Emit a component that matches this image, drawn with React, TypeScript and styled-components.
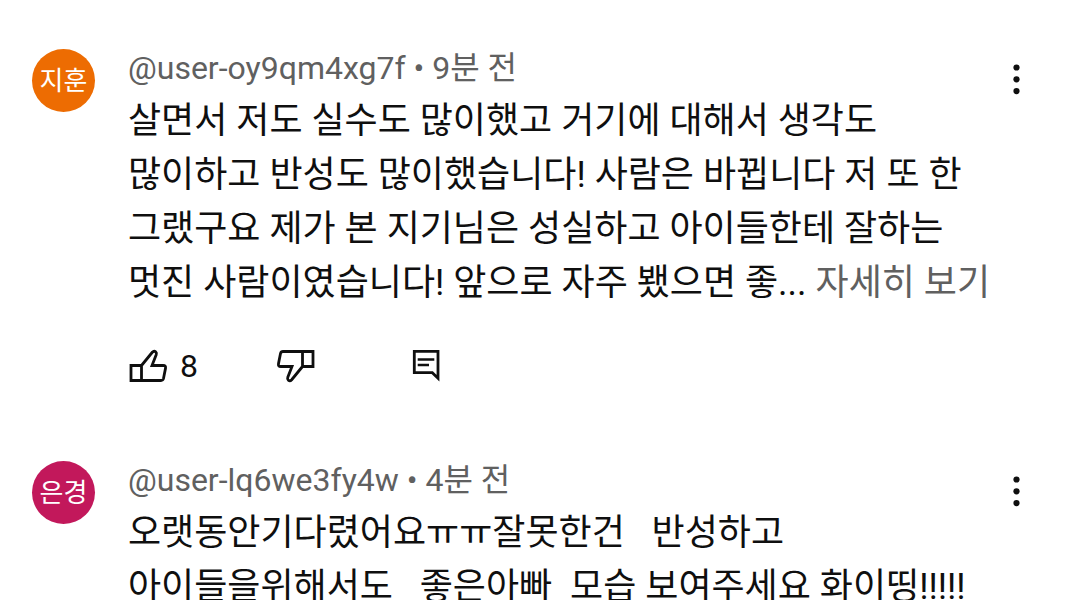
import React from 'react';
import styled, { createGlobalStyle } from 'styled-components';

const Global = createGlobalStyle`
  body { margin: 0; background: #fff; overflow: hidden; font-family: Roboto, "Noto Sans CJK KR", sans-serif; color: #0f0f0f; }
  * { box-sizing: border-box; }
`;
const List = styled.main`
  display: flex; flex-direction: column; gap: 75px; padding: 49px 48px 0 32px; height: 100vh; overflow: hidden;
`;
const Comment = styled.article`
  display: grid; grid-template-columns: 64px minmax(0, 1fr) 32px; column-gap: 32px; flex-shrink: 0;
`;
const Avatar = styled.div<{ $color: string }>`
  width: 63px; height: 63px; border-radius: 50%; background: ${p => p.$color}; color: #fff;
  display: flex; align-items: center; justify-content: center; font-size: 26px; line-height: 32px;
`;
const Meta = styled.header`font-size: 32px; line-height: 38px; color: #606060; white-space: pre;`;
const Handle = styled.a`color: inherit; text-decoration: none;`;
const Body = styled.p`margin: 7px 0 0; font-size: 36px; line-height: 54px;`;
const Line = styled.span`display: block; white-space: pre;`;
const More = styled.button`
  border: 0; padding: 0; background: none; font: inherit; color: #606060; cursor: pointer;
`;
const Actions = styled.div`
  display: grid; grid-template-columns: 148px 136px auto; justify-content: start; margin-top: 36px; height: 40px;
`;
const Action = styled.button`
  display: flex; align-items: center; justify-self: start; gap: 12px; border: 0; padding: 0; background: none;
  color: #0f0f0f; font: inherit; font-size: 32px; line-height: 40px; cursor: pointer;
`;
const Menu = styled.button`
  border: 0; padding: 12px 0 0; height: 48px; width: 32px; background: none; cursor: pointer;
`;
const Icon = styled.svg`display: block; flex-shrink: 0;`;

const Dots = () => (
  <Icon width="32" height="36" viewBox="0 0 32 36" fill="#0f0f0f">
    <circle cx="16.5" cy="6.5" r="3.1" /><circle cx="16.5" cy="18.3" r="3.1" /><circle cx="16.5" cy="30.1" r="3.1" />
  </Icon>
);
const thumb = 'M3 19.5H13.5V34.5H3ZM13.5 19.5L24.3 6.3Q26 4.5 27.7 5.8Q28.9 6.8 28.2 8.8L24 19.5H35.2Q38.1 19.5 37.5 22.4L35.5 32.5Q35 34.5 33 34.5H13.5';
const Like = () => (
  <Icon width="40" height="40" viewBox="0 0 40 40" fill="none" stroke="currentColor" strokeWidth="2.8"><path d={thumb} /></Icon>
);
const Dislike = () => (
  <Icon width="40" height="40" viewBox="0 0 40 40" fill="none" stroke="currentColor" strokeWidth="2.8"><path d={thumb} transform="rotate(180 20 20)" /></Icon>
);
const Reply = () => (
  <Icon width="32" height="40" viewBox="0 0 32 40" fill="none" stroke="currentColor" strokeWidth="2.8">
    <path d="M2.3 5.3H26V32.2L20.3 26.7H2.3Z" /><path d="M5.7 13.4H22.3M5.7 19H17" strokeWidth="2.5" />
  </Icon>
);

type Props = {
  initials: string; color: string; user: string; time: string; lines: string[]; truncated?: boolean; likes?: number;
};
const CommentItem = ({ initials, color, user, time, lines, truncated, likes }: Props) => (
  <Comment>
    <Avatar $color={color}>{initials}</Avatar>
    <div>
      <Meta><Handle href="#">{user}</Handle> • {time}</Meta>
      <Body>
        {lines.map((line, i) => (
          <Line key={line}>
            {line}
            {truncated && i === lines.length - 1 && <> <More>자세히 보기</More></>}
          </Line>
        ))}
      </Body>
      {likes !== undefined && (
        <Actions>
          <Action aria-label="좋아요"><Like />{likes}</Action>
          <Action aria-label="싫어요"><Dislike /></Action>
          <Action aria-label="답글"><Reply /></Action>
        </Actions>
      )}
    </div>
    <Menu aria-label="메뉴"><Dots /></Menu>
  </Comment>
);

export default function App() {
  return (
    <>
      <Global />
      <List>
        <CommentItem
          initials="지훈" color="#ed6c02" user="@user-oy9qm4xg7f" time="9분 전" likes={8} truncated
          lines={[
            '살면서 저도 실수도 많이했고 거기에 대해서 생각도',
            '많이하고 반성도 많이했습니다! 사람은 바뀝니다 저 또 한',
            '그랬구요 제가 본 지기님은 성실하고 아이들한테 잘하는',
            '멋진 사람이였습니다! 앞으로 자주 뵀으면 좋...',
          ]}
        />
        <CommentItem
          initials="은경" color="#c2185b" user="@user-lq6we3fy4w" time="4분 전"
          lines={['오랫동안기다렸어요ㅠㅠ잘못한건   반성하고', '아이들을위해서도   좋은아빠  모습 보여주세요 화이띵!!!!!']}
        />
      </List>
    </>
  );
}
